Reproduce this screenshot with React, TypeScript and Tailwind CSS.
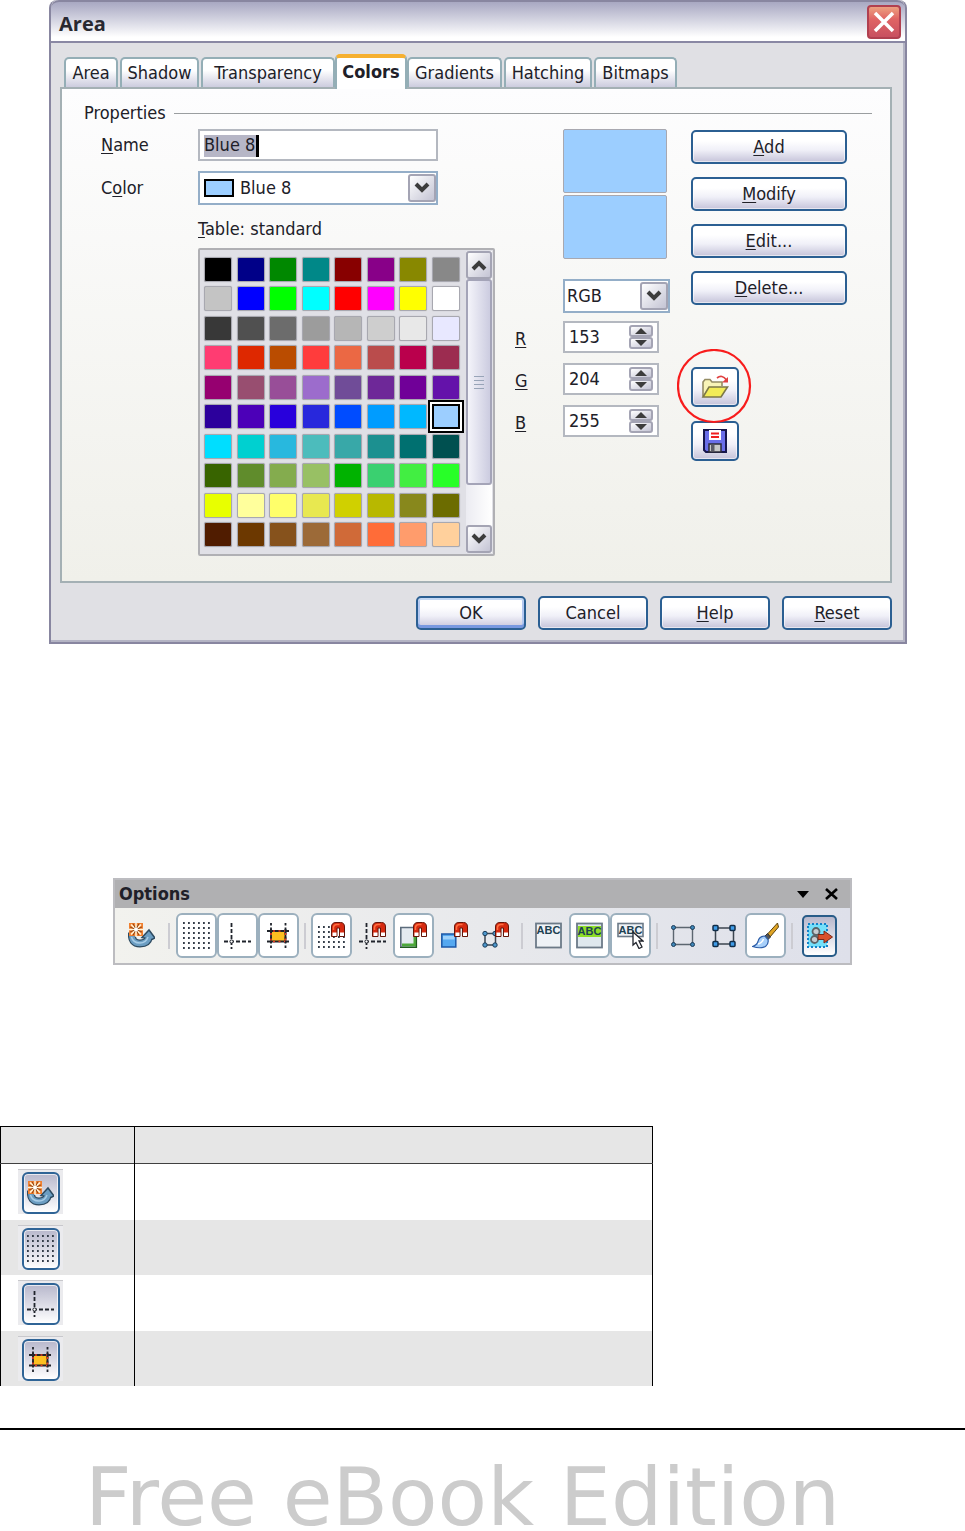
import React, { useState } from 'react';

const PALETTE = [
  ['#000000', '#000088', '#008800', '#008888', '#880000', '#880088', '#888800', '#888888'],
  ['#c4c4c4', '#0000ff', '#00ff00', '#00ffff', '#ff0000', '#ff00ff', '#ffff00', '#ffffff'],
  ['#383838', '#505050', '#6c6c6c', '#9c9c9c', '#b6b6b6', '#cecece', '#e8e8e8', '#e8e8ff'],
  ['#ff3c72', '#de2800', '#ba4c00', '#ff3c3c', '#eb6844', '#ba4c4c', '#ba004c', '#9c2c50'],
  ['#960070', '#984e70', '#984e98', '#9c6ccc', '#704c98', '#6e2898', '#700098', '#6412aa'],
  ['#2c009c', '#4c00b8', '#2800dc', '#2828dc', '#004cff', '#009cff', '#00b8ff', '#9cceff'],
  ['#00deff', '#00d0d0', '#28b8de', '#4cbcbc', '#38a8a8', '#1c9090', '#007070', '#005050'],
  ['#386400', '#608c2c', '#84ac4e', '#98c064', '#00b200', '#3ad070', '#42ee42', '#28ff28'],
  ['#e8ff00', '#ffff9c', '#ffff6a', '#e8e850', '#d0d000', '#b8b800', '#88881c', '#6c6c00'],
  ['#501c00', '#6c3800', '#86521c', '#9c6a38', '#d06a38', '#ff6c38', '#ff9c6c', '#ffd09c'],
];

const TABS = [
  { name: 'Area', width: 'w-[54px]' },
  { name: 'Shadow', width: 'w-[79px]' },
  { name: 'Transparency', width: 'w-[134px]' },
  { name: 'Colors', width: 'w-[72px]' },
  { name: 'Gradients', width: 'w-[95px]' },
  { name: 'Hatching', width: 'w-[88px]' },
  { name: 'Bitmaps', width: 'w-[83px]' },
];

const BUTTON =
  'rounded-[5px] border-2 border-[#2b5f92] bg-linear-to-b from-white from-30% via-[#f0f0f8] via-60% to-[#c6c4da] shadow-[inset_0_0_0_1px_#ffffff90] flex items-center justify-center';
const GREY_BUTTON =
  'rounded-[3px] border-2 border-[#a4a4b4] bg-linear-to-br from-white to-[#c4c4d4] flex items-center justify-center';

/* ---------- icons ---------- */

const Chevron = ({ up = false }: { up?: boolean }) => (
  <svg width="16" height="12" viewBox="0 0 16 12" fill="none" stroke="#3c3c3c" strokeWidth="4">
    <path d={up ? 'M2 10 8 4l6 6' : 'M2 2l6 6 6-6'} />
  </svg>
);

const Magnet = () => (
  <g>
    <path d="M13.5 14.5V5Q13.5.5 18 .5h4.500Q26.500.5 26.500 5v9.500h-5V6h-2.500v8.500z" fill="#d62a10" stroke="#641408" />
    <path d="M15.500 8V5Q16 2.500 19 2.500h2.500" fill="none" stroke="#ff7040" strokeWidth="1.500" />
    <path d="M14.500 10.500h4v3.500h-4zM22 10.500h4v3.500h-4z" fill="#fff" />
  </g>
);

const Icon = ({ children }: { children: React.ReactNode }) => (
  <svg width="27" height="27" viewBox="0 0 27 27" fill="none" className="shrink-0" aria-hidden="true">
    {children}
  </svg>
);

const RotateIcon = () => (
  <>
    <path d="M4 11q-1 10.500 8 10.500 8 0 9-7" stroke="#2d4a60" strokeWidth="8" />
    <path d="M14 15.500 21 8l6 8-3 1.500z" fill="#6b9dc2" stroke="#2d4a60" strokeWidth="1.500" />
    <path d="M4 11.500q-1 10 8 10 8 0 9-7" stroke="#6b9dc2" strokeWidth="5.500" />
    <path d="M3.500 15q1.500 6 8.500 6 6 0 8-6" stroke="#a7cce6" strokeWidth="1.500" />
    <rect x="1" y="1" width="14" height="13" fill="#f08030" />
    <path d="M8 1v14M1 7.500h14M3 2.500l10 10M13 2.500l-10 10" stroke="#fff4d8" strokeWidth="1.500" />
    <path d="M5 1.500l6 12M11 1.500l-6 12M2 5l12 5M14 5 2 10" stroke="#7c3a10" strokeWidth=".8" />
    <circle cx="8" cy="7.500" r="2" fill="#fff" />
  </>
);

const GridIcon = () => (
  <path d="M0 1h27M0 6h27M0 11h27M0 16h27M0 21h27M0 26h27" stroke="#333c48" strokeWidth="1.800" strokeDasharray="1.800 3.200" />
);

const SnapGridIcon = () => (
  <>
    <path d="M0 5h12M0 10h12M0 15h27M0 20h27M0 25h27" stroke="#333c48" strokeWidth="1.800" strokeDasharray="1.800 3.200" />
    <Magnet />
  </>
);

const HelplineIcon = () => (
  <>
    <path d="M7.500 1v26M0 19.500h27" stroke="#20242c" strokeWidth="1.800" strokeDasharray="4 2" />
    <circle cx="7.500" cy="19.500" r="1.600" fill="#fff" stroke="#20242c" />
  </>
);

const GuidesIcon = () => (
  <>
    <rect x="6" y="10" width="14" height="9" fill="#fdbf20" />
    <path d="M6 1v26M20.500 1v26" stroke="#20242c" strokeWidth="1.800" strokeDasharray="2.500 2" />
    <path d="M2 9h22M2 19.500h22M6 7v14M20.500 7v14" stroke="#20242c" strokeWidth="1.800" />
    <path d="M8 9h12M8 19.500h12M6 11v8M20.500 11v8" stroke="#e83a20" strokeWidth="1.600" strokeDasharray="2 3.500" />
  </>
);

const SnapHelplineIcon = () => (
  <>
    <HelplineIcon />
    <Magnet />
  </>
);

const SnapPageIcon = () => (
  <>
    <path d="M.8 5.500h15v19.500H.8z" fill="#e4eaf0" stroke="#5c6c7c" strokeWidth="1.600" />
    <path d="M2 23h13V12" stroke="#4da83a" strokeWidth="3" />
    <path d="M0 25.500h16.500V14" stroke="#1f5a1c" strokeWidth="1.200" />
    <Magnet />
  </>
);

const SnapObjectIcon = () => (
  <>
    <rect x=".8" y="12" width="14" height="13" fill="#55a8f0" stroke="#1c58a8" strokeWidth="1.500" />
    <path d="M2 14h11.500v3.500H2z" fill="#9fd2fb" />
    <Magnet />
  </>
);

const SnapPointsIcon = () => (
  <>
    <path d="M3 11.500h10.500v11.500H3z" stroke="#3c4650" strokeWidth="1.500" />
    {[[3, 11.5], [13, 11.5], [3, 23], [13, 23]].map(([x, y]) => (
      <circle key={`${x}-${y}`} cx={x} cy={y} r="2.200" fill="#4d97cc" stroke="#1c3c58" />
    ))}
    <Magnet />
  </>
);

const AbcText = ({ y }: { y: number }) => (
  <text x="13.500" y={y} textAnchor="middle" fontSize="11" fontWeight="700" fill="#1d4152" fontFamily="Liberation Sans, sans-serif">
    ABC
  </text>
);

const QuickEditIcon = () => (
  <>
    <rect x="1" y="1.500" width="25" height="24" fill="#eef2f6" stroke="#6c7a88" strokeWidth="1.800" />
    <AbcText y={12} />
  </>
);

const SelectTextIcon = () => (
  <>
    <rect x="1" y="1.500" width="25" height="24" fill="#dfe8ee" stroke="#6c7a88" strokeWidth="1.800" />
    <path d="M2 4h23v11H2z" fill="#8ede28" />
    <AbcText y={13} />
  </>
);

const DoubleClickIcon = () => (
  <>
    <rect x="1" y="1.500" width="25" height="13" fill="#eef2f6" stroke="#6c7a88" strokeWidth="1.600" />
    <AbcText y={12} />
    <path d="M16 10v13l3-2.500 3 6 3-1.500-3-6h4z" fill="#fff" stroke="#20242c" strokeWidth="1.300" />
  </>
);

const SimpleHandlesIcon = () => (
  <>
    <path d="M3.500 5.500h19v17h-19z" stroke="#5c6670" strokeWidth="1.400" />
    {[[3.5, 5.5], [22.5, 5.5], [3.5, 22.5], [22.5, 22.5]].map(([x, y]) => (
      <circle key={`${x}-${y}`} cx={x} cy={y} r="2" fill="#3f86b8" stroke="#1c3c58" />
    ))}
  </>
);

const LargeHandlesIcon = () => (
  <>
    <path d="M4.500 6h18v16h-18z" stroke="#3c4650" strokeWidth="1.500" />
    {[[2, 3.5], [19, 3.5], [2, 19.5], [19, 19.5]].map(([x, y]) => (
      <rect key={`${x}-${y}`} x={x} y={y} width="5" height="5" rx="1" fill="#3f9ce8" stroke="#102c48" strokeWidth="1.500" />
    ))}
  </>
);

const BrushIcon = () => (
  <>
    <path d="M25.500 1 15.500 12l2.500 3 8.500-10z" fill="#e0a424" stroke="#5c4410" />
    <path d="M15.500 11.500l-2.500 2.500 3 3.500 2.500-2.500z" fill="#555" stroke="#333" />
    <path d="M13 14q-6 0-7 5.500Q5 23 .5 24.500q8 2.500 13 0 3.500-3 2.500-7z" fill="#a8d0fa" stroke="#2e5ea8" strokeWidth="1.200" />
    <path d="M6 22q4-1 5.500-5" stroke="#fff" strokeWidth="1.500" />
  </>
);

const ObjectAttributesIcon = () => (
  <>
    <rect x="2" y="2" width="19" height="23" fill="#74e0fa" stroke="#1482c8" strokeWidth="2" strokeDasharray="2 2" />
    <circle cx="10" cy="9.500" r="3.500" fill="#c8ccd0" stroke="#5c6468" strokeWidth="1.800" />
    <circle cx="8.500" cy="17.500" r="3.500" fill="#c8ccd0" stroke="#5c6468" strokeWidth="1.800" />
    <path d="M12 12.500h6V9l8.500 6-8.500 6v-3.500h-6z" fill="#d8502c" stroke="#782818" />
  </>
);

const FolderIcon = () => (
  <svg width="28" height="24" viewBox="0 0 28 24" fill="none" aria-hidden="true">
    <path d="M2 21.500V7l2-2.500h5L11 7h10v4" fill="#f8f4b8" stroke="#948c64" strokeWidth="1.600" />
    <path d="M2 22 8 12h18.500L20 22z" fill="#f2ec58" stroke="#7c7848" strokeWidth="1.600" />
    <path d="M16 3q5-4 9.500 2" stroke="#e04040" strokeWidth="1.700" />
    <path d="M27 2v5.500h-6z" fill="#e04040" />
  </svg>
);

const FloppyIcon = () => (
  <svg width="24" height="24" viewBox="0 0 24 24" aria-hidden="true">
    <path d="M1 1h22v22H3l-2-2z" fill="#6a6ee8" stroke="#16164c" strokeWidth="2" />
    <path d="M6 1h12v10H6z" fill="#fff" />
    <path d="M8 4.500h8M8 8h8" stroke="#f02020" strokeWidth="2" />
    <path d="M6 15h12v8H6z" fill="#c8c8c8" stroke="#2c2c38" strokeWidth="1.500" />
    <path d="M8 16h3.500v6H8z" fill="#5c5c68" />
  </svg>
);

/* ---------- small parts ---------- */

const PushButton = ({ hot, rest, className = '' }: { hot?: string; rest: string; className?: string }) => (
  <button type="button" className={`${BUTTON} h-[34px] ${className}`}>
    <span>
      {hot && <span className="underline underline-offset-2">{hot}</span>}
      {rest}
    </span>
  </button>
);

const Spinner = ({ label, initial }: { label: string; initial: number }) => {
  const [value, setValue] = useState(initial);
  const step = (n: number) => setValue(Math.min(255, Math.max(0, value + n)));
  return (
    <div className="flex items-center">
      <label htmlFor={label} className="w-12 pt-1 underline underline-offset-2">{label}</label>
      <div className="flex h-8 w-24 items-center justify-between border-2 border-[#b4b8c0] bg-white pr-1">
        <input
          id={label}
          value={value}
          onChange={(e) => setValue(Number(e.target.value) || 0)}
          className="w-14 pl-1 outline-none"
        />
        <div className="flex flex-col">
          <button type="button" aria-label={`${label} up`} onClick={() => step(1)} className={`${GREY_BUTTON} h-3 w-6`}>
            <svg width="12" height="6" viewBox="0 0 12 6"><path d="M0 6 6 0l6 6z" fill="#3c3c3c" /></svg>
          </button>
          <button type="button" aria-label={`${label} down`} onClick={() => step(-1)} className={`${GREY_BUTTON} h-3 w-6`}>
            <svg width="12" height="6" viewBox="0 0 12 6"><path d="M0 0h12L6 6z" fill="#3c3c3c" /></svg>
          </button>
        </div>
      </div>
    </div>
  );
};

const SelectArrow = () => (
  <span className={`${GREY_BUTTON} pointer-events-none absolute top-1/2 right-[2px] h-7 w-7 -translate-y-1/2`}>
    <Chevron />
  </span>
);

/* ---------- Area dialog ---------- */

const AreaDialog = () => {
  const [name, setName] = useState('Blue 8');
  const [selected, setSelected] = useState('#9cceff');

  return (
    <section className="mr-[58px] ml-[49px] rounded-t-lg border-r-2 border-b-2 border-l-2 border-[#8886a0] bg-[#e0e0e4]">
      <header className="flex h-[43px] items-center justify-between rounded-t-lg border-t-2 border-b-2 border-t-[#8886a0] border-b-[#8a88a4] bg-linear-to-b from-[#a8a8c2] to-white to-90% pr-1 pl-2">
        <h1 className="pt-1 font-['Open_Sans',sans-serif] text-xl font-bold text-[#282830]">Area</h1>
        <button
          type="button"
          aria-label="Close"
          className="flex h-[34px] w-[34px] items-center justify-center rounded-[4px] border-2 border-[#b04050] bg-linear-to-b from-[#eca080] via-[#e06464] via-40% to-[#c85060]"
        >
          <svg width="22" height="22" viewBox="0 0 22 22" stroke="#fff" strokeWidth="3.500"><path d="M2 2l18 18M20 2 2 20" /></svg>
        </button>
      </header>

      <div className="border-r-2 border-b-2 border-r-[#b4b4c4] border-b-[#b4b4c4] pr-[11px] pb-[10px] pl-[9px]">
        <div role="tablist" className="flex h-11 items-end gap-[2px] px-1">
          {TABS.map((tab) =>
            tab.name === 'Colors' ? (
              <button
                key={tab.name}
                role="tab"
                aria-selected="true"
                className={`${tab.width} relative -mx-[2px] -mb-[2px] h-[35px] shrink-0 rounded-t-[5px] border-2 border-t-4 border-b-0 border-[#94aeb6] border-t-[#f6b030] bg-white pb-1 font-bold`}
              >
                {tab.name}
              </button>
            ) : (
              <button
                key={tab.name}
                role="tab"
                aria-selected="false"
                className={`${tab.width} h-[30px] shrink-0 rounded-t-[5px] border-2 border-b-0 border-[#94aeb6] bg-linear-to-b from-white from-40% to-[#ccccde]`}
              >
                {tab.name}
              </button>
            ),
          )}
        </div>

        <div className="h-[496px] border-2 border-[#a4b0b4] bg-linear-to-b from-[#fdfdfe] to-[#f0f0ea] px-[18px] pt-3">
          <div className="flex h-6 items-center gap-2 pl-1">
            <h2>Properties</h2>
            <div className="h-px flex-1 bg-[#9a9ea0]" />
          </div>

          <div className="mt-1 flex">
            {/* name, colour and table */}
            <div className="w-[415px] shrink-0">
              <div className="flex h-8 items-center">
                <label htmlFor="name" className="w-[118px] pl-[21px]"><span className="underline underline-offset-2">N</span>ame</label>
                <div className="relative h-8 w-[240px] border-2 border-[#b4b8c0] bg-white">
                  <span className="absolute top-1 left-1 h-[22px] w-[55px] border-r-3 border-black bg-[#b6b6c6]" />
                  <input
                    id="name"
                    value={name}
                    onChange={(e) => setName(e.target.value)}
                    className="absolute inset-0 w-full bg-transparent pl-1 outline-none"
                  />
                </div>
              </div>
              <div className="mt-[10px] flex h-[34px] items-center">
                <label htmlFor="color" className="w-[118px] pl-[21px]">C<span className="underline underline-offset-2">o</span>lor</label>
                <div className="relative h-[34px] w-[240px]">
                  <select id="color" className="h-full w-full appearance-none border-2 border-[#94aec8] bg-white pl-10">
                    <option>Blue 8</option>
                  </select>
                  <span className="pointer-events-none absolute top-2 left-[6px] h-[18px] w-[30px] border-2 border-black bg-[#9cceff]" />
                  <SelectArrow />
                </div>
              </div>

              <div className="mt-3 ml-[118px]">
                <h3 className="h-6"><span className="underline underline-offset-2">T</span>able: standard</h3>
                <div className="mt-[7px] flex h-[308px] w-[297px] justify-between rounded-[2px] border-2 border-[#b0b0b4] bg-[#e0e0e6] py-px pr-px pl-1">
                  <div className="my-1 grid h-[294px] w-[256px] grid-cols-[repeat(8,28px)] content-between justify-between py-[2px]">
                    {PALETTE.flat().map((color) => (
                      <button
                        key={color}
                        type="button"
                        aria-label={color}
                        onClick={() => setSelected(color)}
                        className={
                          color === selected
                            ? 'h-[25px] border-2 border-black outline-2 outline-offset-2 outline-black ring-2 ring-white'
                            : 'h-[25px] rounded-[2px] border border-[#a8a8b0] shadow-[0_0_1px_#a0a0a8]'
                        }
                        style={{ backgroundColor: color }}
                      />
                    ))}
                  </div>
                  <div className="flex w-[26px] flex-col bg-linear-to-r from-[#ececf2] to-white">
                    <button type="button" aria-label="Scroll up" className={`${GREY_BUTTON} h-7`}><Chevron up /></button>
                    <div className="flex h-[206px] flex-col items-center justify-center gap-[3px] rounded-[3px] border-2 border-[#a4a4b8] bg-linear-to-r from-[#f4f4fa] to-[#cccce0]">
                      <i className="h-px w-[10px] bg-[#98a4b8]" />
                      <i className="h-px w-[10px] bg-[#98a4b8]" />
                      <i className="h-px w-[10px] bg-[#98a4b8]" />
                      <i className="h-px w-[10px] bg-[#98a4b8]" />
                    </div>
                    <button type="button" aria-label="Scroll down" className={`${GREY_BUTTON} mt-auto h-7`}><Chevron /></button>
                  </div>
                </div>
              </div>
            </div>

            {/* previews and channels */}
            <div className="ml-5 w-[176px] shrink-0">
              <div className="ml-12 flex w-[104px] flex-col gap-[2px]">
                <div className="h-16 rounded-[2px] border border-[#a8a8b0] bg-[#9cceff]" />
                <div className="h-16 rounded-[2px] border border-[#a8a8b0] bg-[#9cceff]" />
              </div>
              <div className="relative mt-5 ml-12 h-[34px] w-[107px]">
                <select aria-label="Color model" className="h-full w-full appearance-none border-2 border-[#94aec8] bg-white pl-[2px]">
                  <option>RGB</option>
                  <option>CMYK</option>
                </select>
                <SelectArrow />
              </div>
              <div className="mt-2 flex flex-col gap-[10px]">
                <Spinner label="R" initial={153} />
                <Spinner label="G" initial={204} />
                <Spinner label="B" initial={255} />
              </div>
            </div>

            {/* actions */}
            <div className="mt-px w-[156px] shrink-0">
              <div className="flex flex-col gap-[13px]">
                <PushButton hot="A" rest="dd" />
                <PushButton hot="M" rest="odify" />
                <PushButton hot="E" rest="dit..." />
                <PushButton hot="D" rest="elete..." />
              </div>
              <div className="mt-[62px] flex flex-col gap-[14px]">
                <div className="relative w-12">
                  <button type="button" aria-label="Load color table" className={`${BUTTON} h-10 w-12`}><FolderIcon /></button>
                  <svg className="pointer-events-none absolute -top-[18px] -left-[14px]" width="76" height="76" viewBox="0 0 76 76">
                    <circle cx="37" cy="37" r="36" fill="none" stroke="#f81c1c" strokeWidth="2.200" />
                  </svg>
                </div>
                <button type="button" aria-label="Save color table" className={`${BUTTON} h-10 w-12`}><FloppyIcon /></button>
              </div>
            </div>
          </div>
        </div>

        <footer className="mt-[13px] flex justify-end gap-3">
          <button type="button" className={`${BUTTON} h-[34px] w-[110px] shadow-[inset_0_2px_0_#c4d8f4,inset_0_-3px_0_#7898e0,inset_2px_0_0_#b4c8f0,inset_-2px_0_0_#b4c8f0]`}>OK</button>
          <PushButton rest="Cancel" className="w-[110px]" />
          <PushButton hot="H" rest="elp" className="w-[110px]" />
          <PushButton hot="R" rest="eset" className="w-[110px]" />
        </footer>
      </div>
    </section>
  );
};

/* ---------- Options toolbar ---------- */

const OPTIONS: { name: string; icon: React.ReactNode; on?: boolean }[][] = [
  [{ name: 'Rotation mode', icon: <RotateIcon /> }],
  [
    { name: 'Display grid', icon: <GridIcon />, on: true },
    { name: 'Display snap lines', icon: <HelplineIcon />, on: true },
    { name: 'Helplines while moving', icon: <GuidesIcon />, on: true },
  ],
  [
    { name: 'Snap to grid', icon: <SnapGridIcon />, on: true },
    { name: 'Snap to snap lines', icon: <SnapHelplineIcon /> },
    { name: 'Snap to page margins', icon: <SnapPageIcon />, on: true },
    { name: 'Snap to object border', icon: <SnapObjectIcon /> },
    { name: 'Snap to object points', icon: <SnapPointsIcon /> },
  ],
  [
    { name: 'Allow quick editing', icon: <QuickEditIcon /> },
    { name: 'Select text area only', icon: <SelectTextIcon />, on: true },
    { name: 'Double-click to edit text', icon: <DoubleClickIcon />, on: true },
  ],
  [
    { name: 'Simple handles', icon: <SimpleHandlesIcon /> },
    { name: 'Large handles', icon: <LargeHandlesIcon /> },
    { name: 'Create object with attributes', icon: <BrushIcon />, on: true },
  ],
];

const OptionsToolbar = () => (
  <section className="mr-[113px] ml-[113px] border-2 border-[#bcbcc0] bg-linear-to-r from-[#f2f2ee] to-[#dee0ea]">
    <header className="flex h-7 items-center bg-[#b0b0b2] pr-3 pl-1">
      <h2 className="flex-1 font-bold">Options</h2>
      <button type="button" aria-label="Menu"><svg width="12" height="7" viewBox="0 0 12 7"><path d="M0 0h12L6 7z" /></svg></button>
      <button type="button" aria-label="Close toolbar" className="ml-4">
        <svg width="13" height="12" viewBox="0 0 13 12" stroke="#000" strokeWidth="2.600"><path d="M1 1l11 10M12 1 1 11" /></svg>
      </button>
    </header>
    <div className="flex h-[55px] items-center pl-[6px]">
      {OPTIONS.map((group, i) => (
        <React.Fragment key={i}>
          {group.map((item) => (
            <button
              key={item.name}
              type="button"
              aria-label={item.name}
              className={`flex h-[45px] w-[41px] items-center justify-center ${item.on ? 'rounded-[6px] border-2 border-[#9cb0be] bg-white' : ''}`}
            >
              <Icon>{item.icon}</Icon>
            </button>
          ))}
          <span className={`h-[26px] w-[2px] bg-[#ccccd2] ${i === 0 ? 'mx-[6px]' : 'mx-[5px]'}`} />
        </React.Fragment>
      ))}
      <button
        type="button"
        aria-label="Exit all groups"
        className="ml-1 flex h-[42px] w-[35px] items-center justify-center rounded-[5px] border-2 border-[#285c88] bg-linear-to-b from-[#b8b8cc] to-white"
      >
        <Icon><ObjectAttributesIcon /></Icon>
      </button>
    </div>
  </section>
);

/* ---------- icon table ---------- */

const ROWS = [
  { icon: <RotateIcon />, name: 'Rotation mode' },
  { icon: <GridIcon />, name: 'Display grid' },
  { icon: <HelplineIcon />, name: 'Display snap lines' },
  { icon: <GuidesIcon />, name: 'Helplines while moving' },
];

const IconTable = () => (
  <table className="w-[653px] border-collapse border-x border-t border-black">
    <thead>
      <tr className="h-[37px] border-b border-[#404040] bg-[#e6e6e6]">
        <th className="w-[134px] border-r border-black" />
        <th />
      </tr>
    </thead>
    <tbody>
      {ROWS.map((row, i) => (
        <tr key={row.name} className={i % 2 ? 'h-[55px] bg-[#e6e6e6]' : 'h-14 bg-white'}>
          <td className="border-r border-black p-0 align-top">
            <div className="mt-[5px] ml-[17px] flex h-[45px] w-[45px] items-end justify-center border-t border-[#c8c8cc] bg-[#ebebee]">
              <button
                type="button"
                aria-label={row.name}
                className="flex h-[42px] w-[38px] items-center justify-center rounded-[6px] border-2 border-[#2f6496] bg-linear-to-b from-[#b8b8cc] to-white shadow-[inset_0_0_0_1px_#ffffffb0]"
              >
                <Icon>{row.icon}</Icon>
              </button>
            </div>
          </td>
          <td />
        </tr>
      ))}
    </tbody>
  </table>
);

const App: React.FC = () => (
  <main className="bg-white font-['DejaVu_Sans_Condensed','DejaVu_Sans',sans-serif] text-lg leading-6 text-[#202028]">
    <AreaDialog />
    <div className="mt-[234px]"><OptionsToolbar /></div>
    <div className="mt-[161px]"><IconTable /></div>
    <footer className="mt-[42px] border-t-2 border-black pt-[35px] pl-[85px] font-['DejaVu_Sans',sans-serif] text-[81px] leading-[64px] whitespace-nowrap text-[#cccccc]">
      Free eBook Edition
    </footer>
  </main>
);

export default App;
